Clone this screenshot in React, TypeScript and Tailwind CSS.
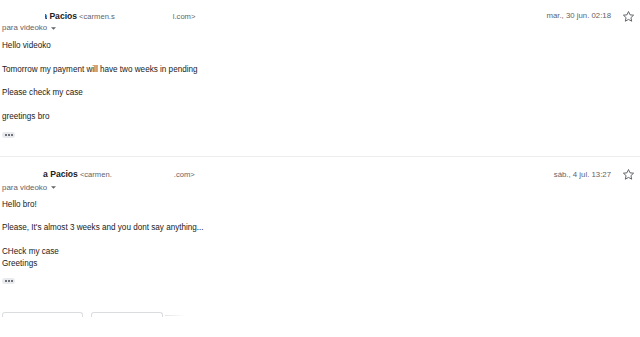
const font = { fontFamily: '"Liberation Sans", Arial, sans-serif' };

function Star() {
  return (
    <svg className="w-[13px] h-[13px] text-[#5f6368]" viewBox="0 0 24 24" fill="none" stroke="currentColor" strokeWidth={1.8} strokeLinejoin="round">
      <path d="M12 2.8l2.8 6.1 6.6.7-4.9 4.5 1.4 6.6L12 17.4l-5.9 3.3 1.4-6.6-4.9-4.5 6.6-.7z" />
    </svg>
  );
}

function Pill() {
  return (
    <div className="w-[13px] h-[6px] rounded-full bg-[#e8eaed] flex items-center justify-center gap-[1px]">
      <span className="w-[2px] h-[2px] bg-[#6f7378]" />
      <span className="w-[2px] h-[2px] bg-[#6f7378]" />
      <span className="w-[2px] h-[2px] bg-[#6f7378]" />
    </div>
  );
}

function Header({ clipped, lead, email1, email2, gap, date }: { clipped?: boolean; lead: string; email1: string; email2: string; gap: string; date: string }) {
  return (
    <div className="flex items-center h-[12px]">
      <div className={`flex items-baseline ${lead}`}>
        {clipped ? (
          <span className="text-[8.6px] font-bold text-[#202124] inline-flex justify-end w-[2px] overflow-hidden">a</span>
        ) : (
          <span className="text-[8.6px] font-bold text-[#202124]">a</span>
        )}
        <span className="text-[8.6px] font-bold text-[#202124] whitespace-pre"> Pacios</span>
        <span className="ml-[2px] text-[7.6px] text-[#5f6368]">{email1}</span>
        <span className={`${gap} text-[7.6px] text-[#5f6368]`}>{email2}</span>
      </div>
      <div className="ml-auto flex items-center">
        <span className="text-[7.8px] text-[#5f6368]">{date}</span>
        <span className="ml-[11px] mr-[5px]">
          <Star />
        </span>
      </div>
    </div>
  );
}

function ParaLine() {
  return (
    <div className="flex items-center h-[10px] pl-[2px] text-[7.9px] text-[#5f6368]">
      para videoko
      <svg className="ml-[4px] w-[5px] h-[3px]" viewBox="0 0 10 5" fill="#5f6368">
        <path d="M0 0h10L5 5z" />
      </svg>
    </div>
  );
}

export default function App() {
  return (
    <div className="w-[640px] h-[337px] bg-white overflow-hidden" style={font}>
      {/* Message 1 */}
      <div className="pt-[10px]">
        <Header clipped lead="pl-[45px]" email1="<carmen.s" email2="l.com>" gap="ml-[58px]" date="mar., 30 jun. 02:18" />
        <div className="mt-[1px]">
          <ParaLine />
        </div>
        <div className="pl-[2px] mt-[7px] text-[8.15px] leading-[11.8px] text-[#222]">
          <p>Hello videoko</p>
          <p className="mt-[11.8px]">Tomorrow my payment will have two weeks in pending</p>
          <p className="mt-[11.8px]">Please check my case</p>
          <p className="mt-[11.8px]">greetings bro</p>
        </div>
        <div className="pl-[2px] mt-[9px]">
          <Pill />
        </div>
      </div>

      <div className="mt-[18px] h-px bg-[#eeeeee]" />

      {/* Message 2 */}
      <div className="pt-[12px]">
        <Header lead="pl-[43px]" email1="<carmen." email2=".com>" gap="ml-[62px]" date="sáb., 4 jul. 13:27" />
        <div className="mt-[2px]">
          <ParaLine />
        </div>
        <div className="pl-[2px] mt-[6px] text-[8.15px] leading-[11.8px] text-[#222]">
          <p>Hello bro!</p>
          <p className="mt-[11.8px]">Please, It's almost 3 weeks and you dont say anything...</p>
          <p className="mt-[11.8px]">CHeck my case</p>
          <p>Greetings</p>
        </div>
        <div className="pl-[2px] mt-[9px]">
          <Pill />
        </div>
      </div>

      {/* Reply buttons, cut off */}
      <div className="mt-[28px] flex items-end pl-[2px] gap-[8px]">
        <div className="w-[81px] h-[5px] rounded-t-[3px] border-t border-x border-[#dadce0]" />
        <div className="w-[72px] h-[5px] rounded-t-[3px] border-t border-x border-[#dadce0]" />
        <div className="-ml-[6px] mb-[1px] w-[20px] h-px bg-gradient-to-r from-[#e4e4e4] to-white" />
      </div>
    </div>
  );
}
